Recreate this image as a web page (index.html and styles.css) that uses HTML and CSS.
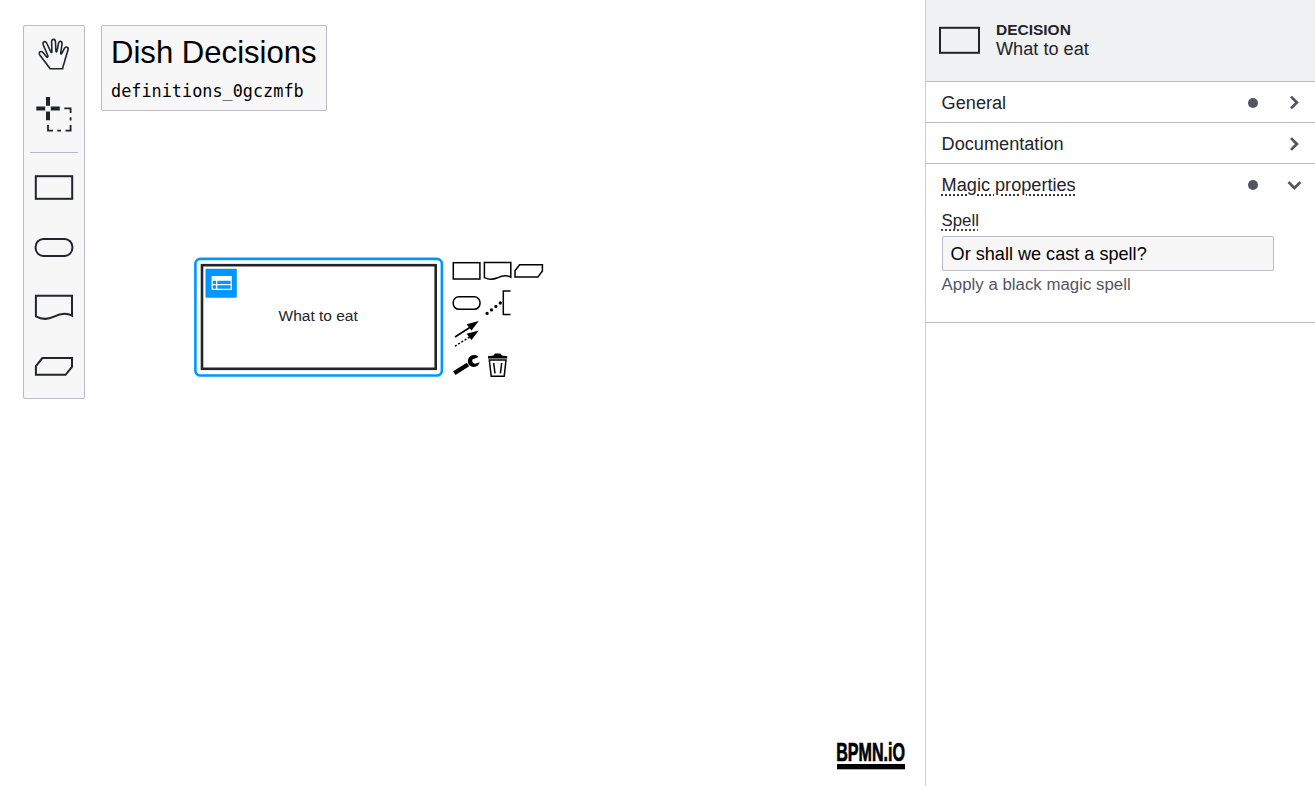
FILE: index.html
```html
<!DOCTYPE html>
<html lang="en">
<head>
<meta charset="utf-8">
<title>Dish Decisions</title>
<link rel="stylesheet" href="styles.css">
</head>
<body>
<div class="modeler">
  <main class="canvas">
    <svg class="diagram" viewBox="190 250 260 130">
      <rect class="selection" x="195.4" y="258.9" width="246.5" height="116.6" rx="5"/>
      <rect class="decision" x="202" y="265.2" width="233.7" height="103.6"/>
      <rect class="drill" x="205.5" y="268.8" width="31.3" height="29" rx="1"/>
      <path fill="#fff" fill-rule="evenodd" d="M211.6 276H231.8V290.1H211.6ZM212.8 280.8V284H216.1V280.8ZM217.3 280.8V284H230.6V280.8ZM212.8 285.3V288.8H216.1V285.3ZM217.3 285.3V288.8H230.6V285.3Z"/>
      <text class="decision-name" x="318.2" y="321" text-anchor="middle">What to eat</text>
    </svg>

    <nav class="palette">
      <svg class="tool" viewBox="24 26 60 60"><path class="thin" d="M50.2 68.8 40 55.2C37.8 52 41 50.4 43 52.6L46.7 57C48 57.6 48.1 56.4 47.6 55L43.3 45C42.1 41.7 45.6 40.2 46.9 43.5L50.8 51.9C51.3 52.8 52 52.6 51.9 51.6L51.6 42C51.5 38.5 55.3 38.4 55.5 42L55.9 51.2C56 52.2 56.8 52.2 57 51.2L58.5 43.4C59.2 40.2 62.5 40.9 62 44.2L60.7 53C60.6 54.1 61.4 54.4 61.8 53.4L64.3 48.7C65.8 45.8 69 47 67.9 50.2L65.2 59.2C64.6 62.7 63.2 64.8 62.6 68.8Z"/></svg>
      <svg class="tool" viewBox="24 86 60 60"><path class="cross" d="M36.3 108.4H45.2M50.8 108.4H59.8M48 97V105.8M48 111.5V120.3"/><path class="lasso" d="M64.3 108.4H70.6V113M70.6 117.3V120.5M70.6 125V130.6H65.5M61 130.6H57.2M53 130.6H48V125"/></svg>
      <div class="separator"></div>
      <svg class="tool" viewBox="24 158 60 60"><rect x="35.8" y="176.2" width="36.4" height="22.6"/></svg>
      <svg class="tool" viewBox="24 218 60 60"><rect x="35.6" y="238.9" width="36.8" height="17" rx="7.8"/></svg>
      <svg class="tool" viewBox="24 278 60 60"><path d="M35.9 295.7H72V315.7C66 312.2 60.5 313.3 54 316.6 47.5 319.8 42 319.8 35.9 316.4Z"/></svg>
      <svg class="tool" viewBox="24 338 60 60"><path d="M42.4 358.1H72V366.9L65.5 374.8H35.9V366Z"/></svg>
    </nav>

    <section class="definitions">
      <div class="definitions-name">Dish Decisions</div>
      <div class="definitions-id">definitions_0gczmfb</div>
    </section>

    <div class="context-pad">
      <div class="pad-row">
        <svg viewBox="451 256 31 31"><rect x="453.3" y="262.7" width="26.6" height="16.3"/></svg>
        <svg viewBox="482 256 31 31"><path d="M484.4 262.6H510.8V277.2C506.5 274.7 502.3 275.4 497.5 277.8 492.7 280 488.7 280 484.4 277.7Z"/></svg>
        <svg viewBox="513 256 31 31"><path d="M519.6 264.8H542.4V271L537.8 277.1H515V270.7Z"/></svg>
      </div>
      <div class="pad-row">
        <svg viewBox="451 287 31 31"><rect x="453.2" y="296.8" width="26.8" height="12.5" rx="5.7"/></svg>
        <svg viewBox="482 287 31 31"><path d="M510.5 291H503.3V314.4H510.5"/><path class="dots" d="M487.1 313.4 500.4 302.9"/></svg>
      </div>
      <div class="pad-row">
        <svg viewBox="451 318 31 31"><path d="M455 337 470.5 327"/><path class="dash" d="M455 346.2 470.5 336.4"/><path class="solid" d="M478.8 321.1 466.6 324.3 471.5 330.5ZM478.8 330.6 466.6 333.8 471.5 340Z"/></svg>
      </div>
      <div class="pad-row">
        <svg viewBox="451 349 31 31"><path class="handle" d="M454.3 373.2 468 364.5"/><path class="solid" d="M478.6 357C475.5 353.7 469.8 354.6 468.2 359.1 466.7 363.8 470.2 367.3 474 367 476.9 366.8 479 364.8 479.7 362.3L475.4 363.7C473 363.6 471.7 361.7 472.4 359.5Z"/></svg>
        <svg viewBox="482 349 31 31"><path d="M489.3 360H506L504.2 376.3H491.2ZM493.7 363 495 373.4M501.7 363 500.4 373.4"/><path class="solid" d="M488 358.4V356.2L493.4 355.4 495 353.6H500.4L502 355.4 507.2 356.2V358.4Z"/></svg>
      </div>
    </div>

    <svg class="logo" viewBox="832 732 78 42"><text transform="translate(836.2 761.4) scale(.607 1)">BPMN.iO</text><rect x="837" y="764" width="68" height="5.3"/></svg>
  </main>

  <aside class="properties">
    <header class="header">
      <svg class="header-icon" viewBox="938 24 44 32"><rect x="940" y="27.8" width="39" height="25"/></svg>
      <div>
        <div class="type">DECISION</div>
        <div class="label">What to eat</div>
      </div>
    </header>
    <section class="group">
      <div class="group-header"><span class="title">General</span><span class="dot"></span><svg class="arrow" viewBox="0 0 16 16"><path d="M5 2.6 10.9 8.5 5 14.4"/></svg></div>
    </section>
    <section class="group">
      <div class="group-header"><span class="title">Documentation</span><svg class="arrow" viewBox="0 0 16 16"><path d="M5 3.1 10.9 9 5 14.9"/></svg></div>
    </section>
    <section class="group">
      <div class="group-header"><span class="title"><span class="hint">Magic properties</span></span><span class="dot"></span><svg class="arrow" viewBox="0 0 16 16"><path d="M2.5 6.1 8.4 12 14.3 6.1"/></svg></div>
      <div class="entry">
        <label class="entry-label" for="spell"><span class="hint">Spell</span></label>
        <input class="entry-input" id="spell" type="text" value="Or shall we cast a spell?">
        <div class="description">Apply a black magic spell</div>
      </div>
    </section>
  </aside>
</div>
</body>
</html>
```
FILE: styles.css
```css
* { box-sizing: border-box; }
body { margin: 0; background: #fff; font-family: "Liberation Sans", Arial, sans-serif; }
svg { display: block; }
.modeler { display: flex; height: 786px; overflow: hidden; }
.canvas { position: relative; flex: 1; }

.diagram { position: absolute; left: 190px; top: 250px; width: 260px; height: 130px; }
.selection { fill: none; stroke: #0096ff; stroke-width: 2.6; }
.decision { fill: #fff; stroke: #22242a; stroke-width: 2.6; }
.drill { fill: #0096ff; }
.decision-name { font-size: 15.49px; fill: #22242a; }

.palette { position: absolute; left: 23px; top: 25px; width: 62px; border: 1px solid #b9b9c9; border-radius: 2px; background: #f7f7f7; }
.tool { width: 60px; height: 60px; fill: none; stroke: #22242a; stroke-width: 2; }
.tool .thin { stroke-width: 1.6; }
.tool .cross { stroke-width: 4; }
.tool .lasso { stroke-width: 1.8; }
.separator { height: 1px; margin: 6px 6px 5px; background: #b9b9c9; }

.definitions { position: absolute; left: 101px; top: 25px; width: 226px; height: 86px; padding: 9px 9px; border: 1px solid #b9b9c9; border-radius: 2px; background: #f7f7f7; color: #000; white-space: nowrap; }
.definitions-name { font-size: 31.1px; line-height: 36px; }
.definitions-id { margin-top: 10px; font: 16.85px/20px "DejaVu Sans Mono", monospace; }

.context-pad { position: absolute; left: 451px; top: 256px; }
.pad-row { display: flex; }
.pad-row svg { width: 31px; height: 31px; fill: none; stroke: #000; stroke-width: 1.5; }
.pad-row .solid { fill: #000; stroke: none; }
.pad-row .dots { stroke-width: 3.3; stroke-linecap: round; stroke-dasharray: 0 5.6; }
.pad-row .dash { stroke-dasharray: 2 1.8; }
.pad-row .handle { stroke-width: 4.4; }

.logo { position: absolute; left: 832px; top: 732px; width: 78px; height: 42px; font-size: 26.5px; font-weight: bold; }
.logo text { stroke: #000; stroke-width: .7; }

.properties { width: 390px; border-left: 1px solid #ccc; background: #fff; color: #22242a; }
.header { display: flex; align-items: center; gap: 14px; height: 82px; padding: 0 12px 2px; border-bottom: 1px solid #b9b9c9; background: #f0f1f3; }
.header-icon { width: 44px; height: 32px; fill: none; stroke: #22242a; stroke-width: 2; }
.type { font-size: 15.49px; line-height: 19px; font-weight: bold; }
.label { font-size: 18.15px; line-height: 20px; }
.group { border-bottom: 1px solid #b9b9c9; }
.group-header { display: flex; align-items: center; height: 40px; padding: 0 13px 0 15.6px; font-size: 18.15px; }
.title { flex: 1; line-height: 21px; padding-top: 3px; }
.hint { text-decoration: underline dotted; text-underline-offset: 3.5px; }
.dot { width: 10px; height: 10px; margin: 1px 28px 0 0; border-radius: 50%; background: #52555f; }
.arrow { width: 16px; height: 16px; fill: none; stroke: #52555f; stroke-width: 2.7; }
.entry { height: 118px; padding: 7px 41px 0 15.6px; }
.entry-label { display: block; font-size: 16.8px; line-height: 20px; }
.entry-input { display: block; width: 332px; height: 35px; margin: 5px 0 4px; padding: 1px 8px 0; border: 1px solid #b9b9c9; border-radius: 2px; background: #f7f7f7; color: #000; font: 18.1px "Liberation Sans", Arial, sans-serif; }
.description { color: #52555f; font-size: 16.85px; line-height: 20px; }
```
